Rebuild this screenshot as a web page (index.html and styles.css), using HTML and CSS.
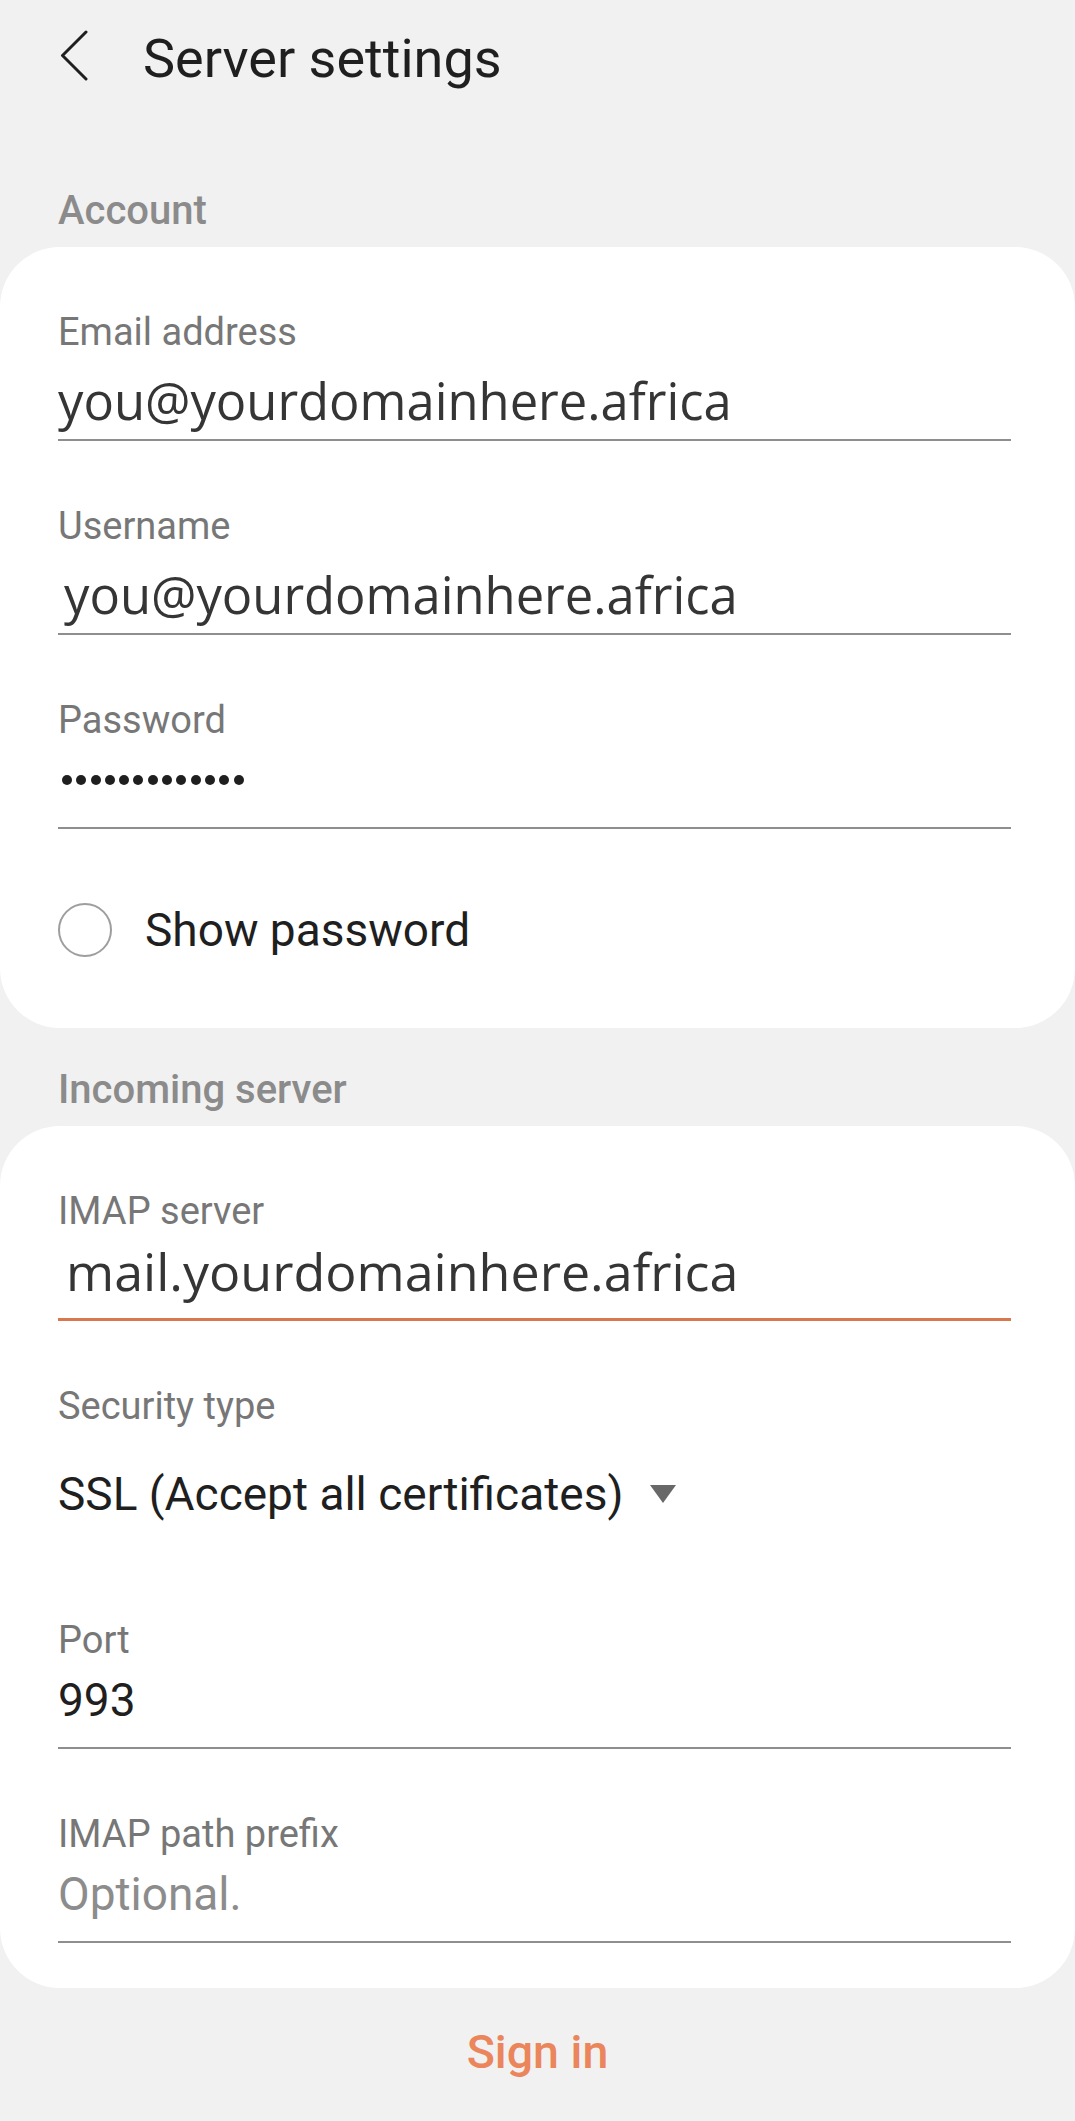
FILE: index.html
```html
<!DOCTYPE html>
<html lang="en">
<head>
    <meta charset="UTF-8">
    <meta name="viewport" content="width=device-width, initial-scale=1.0">
    <title>Server settings</title>
    <link rel="stylesheet" href="styles.css">
</head>
<body>
    <div class="appbar">
        <button class="back" aria-label="Back">
            <svg width="28" height="52" viewBox="0 0 28 52">
                <polyline points="26,2 2.5,25.5 26,49" fill="none" stroke="#1f1f1f" stroke-width="3" stroke-linecap="round" stroke-linejoin="round"/>
            </svg>
        </button>
        <h1 class="title">Server settings</h1>
    </div>

    <h2 class="section-title">Account</h2>
    <section class="card card-account">
        <div class="field">
            <label class="field-label">Email address</label>
            <div class="field-value pasted">you@yourdomainhere.africa</div>
        </div>
        <div class="field">
            <label class="field-label">Username</label>
            <div class="field-value pasted indent-sm">you@yourdomainhere.africa</div>
        </div>
        <div class="field">
            <label class="field-label">Password</label>
            <div class="field-value dots" aria-label="Password hidden">
                <span></span><span></span><span></span><span></span><span></span><span></span><span></span><span></span><span></span><span></span><span></span><span></span><span></span>
            </div>
        </div>
        <div class="check-row">
            <span class="radio"></span>
            <span class="check-text">Show password</span>
        </div>
    </section>

    <h2 class="section-title">Incoming server</h2>
    <section class="card card-incoming">
        <div class="field focused">
            <label class="field-label">IMAP server</label>
            <div class="field-value pasted server-value">mail.yourdomainhere.africa</div>
        </div>
        <div class="field plain">
            <label class="field-label">Security type</label>
            <div class="select-value">
                <span>SSL (Accept all certificates)</span>
                <span class="caret"></span>
            </div>
        </div>
        <div class="field">
            <label class="field-label">Port</label>
            <div class="field-value">993</div>
        </div>
        <div class="field">
            <label class="field-label">IMAP path prefix</label>
            <div class="field-value placeholder">Optional.</div>
        </div>
    </section>

    <div class="footer">
        <button class="signin">Sign in</button>
    </div>
</body>
</html>
```

FILE: styles.css
```css
body { margin: 0; background: #f1f1f1; font-family: Roboto, "Liberation Sans", sans-serif; color: #1f1f1f; }

.appbar { display: flex; align-items: center; height: 64px; padding: 27px 0 0 60px; }
.back { border: 0; background: none; padding: 0; width: 28px; height: 52px; margin-top: -7px; }
.back svg { display: block; }
.title { margin: 0 0 0 55px; font-size: 54px; font-weight: 400; line-height: 64px; color: #1f1f1f; }

.section-title { margin: 96px 0 13px 58px; font-size: 40px; font-weight: 500; line-height: 47px; color: #8b8b8b; }
.card + .section-title { margin-top: 38px; }

.card { background: #fff; border-radius: 60px; padding: 0 64px 0 58px; }
.card-incoming { padding-bottom: 45px; }

.field { padding: 63px 0 19px; border-bottom: 2px solid #8e8e8e; }
.field.focused { border-bottom: 3px solid #d9784f; }
.field.plain { border-bottom: 0; padding-bottom: 33px; }
.field-label { display: block; font-size: 38px; line-height: 44px; color: #777; }
.field-value { margin-top: 10px; font-size: 46px; line-height: 56px; color: #1f1f1f; }
.field-value.placeholder { color: #8c8c8c; }

/* values that were pasted in look like a different font */
.field-value.pasted { font-family: "Open Sans", "DejaVu Sans", sans-serif; font-size: 50.7px; color: #353535; margin-top: 19px; margin-bottom: -9px; }
.field-value.server-value { font-size: 52px; margin-top: 10px; margin-bottom: 0; padding-left: 8px; }
.indent-sm { padding-left: 6px; }

.dots { display: flex; align-items: center; gap: 4.3px; height: 56px; padding-left: 4px; }
.dots span { width: 10px; height: 10px; border-radius: 50%; background: #1f1f1f; }

.check-row { display: flex; align-items: center; height: 56px; padding: 73px 0 70px; }
.radio { width: 50px; height: 50px; border: 2px solid #9e9e9e; border-radius: 50%; }
.check-text { margin-left: 33px; font-size: 46px; line-height: 56px; }

.select-value { display: flex; align-items: center; gap: 27px; margin-top: 38px; font-size: 46px; line-height: 56px; }
.caret { width: 0; height: 0; border-left: 13.5px solid transparent; border-right: 13.5px solid transparent; border-top: 18px solid #686868; }

.footer { padding-top: 36px; text-align: center; }
.signin { border: 0; background: none; padding: 0; font-family: inherit; font-size: 46.5px; font-weight: 500; line-height: 56px; color: #ea855c; }
```
